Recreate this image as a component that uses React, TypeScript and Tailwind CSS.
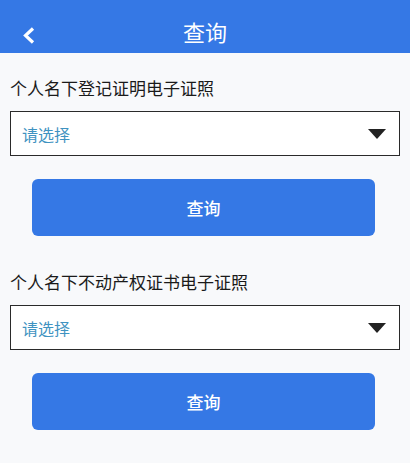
const font = { fontFamily: '"Noto Sans CJK SC", "Noto Sans", sans-serif' };

const sections = ["个人名下登记证明电子证照", "个人名下不动产权证书电子证照"];

function Caret() {
  return (
    <svg width="18" height="10" viewBox="0 0 18 10">
      <path d="M0 0 H18 L9 10 Z" fill="#222" />
    </svg>
  );
}

function QuerySection({ title }: { title: string }) {
  return (
    <div>
      <p className="text-[17px] leading-[24px] text-[#1a1a1a] pl-[10px] pt-[23px]">{title}</p>
      <div className="mx-[10px] mt-[11px] h-[45px] border-[1.5px] border-[#2a2a2a] bg-white flex items-center justify-between pl-[11px] pr-[13px]">
        <span className="text-[16px] text-[#3f93c1]">请选择</span>
        <Caret />
      </div>
      <div className="px-[32px] pt-[23px] pb-[11px] mr-[3px]">
        <button className="w-full h-[57px] rounded-[6px] bg-[#3578e5] text-white text-[17px] font-medium">
          查询
        </button>
      </div>
    </div>
  );
}

const App = () => {
  return (
    <div className="w-[410px] h-[463px] bg-[#f8f9fb] overflow-hidden" style={font}>
      <div className="h-[53px] bg-[#3578e5] relative flex items-end justify-center pb-[7px]">
        <svg
          className="absolute left-[22px] top-[27px]"
          width="14"
          height="17"
          viewBox="0 0 14 17"
        >
          <path d="M11 1.5 L3.5 8.5 L11 15.5" fill="none" stroke="#fff" strokeWidth="3.2" />
        </svg>
        <span className="text-white text-[22px] leading-[30px]">查询</span>
      </div>
      {sections.map((t) => (
        <QuerySection key={t} title={t} />
      ))}
    </div>
  );
};

export default App;
